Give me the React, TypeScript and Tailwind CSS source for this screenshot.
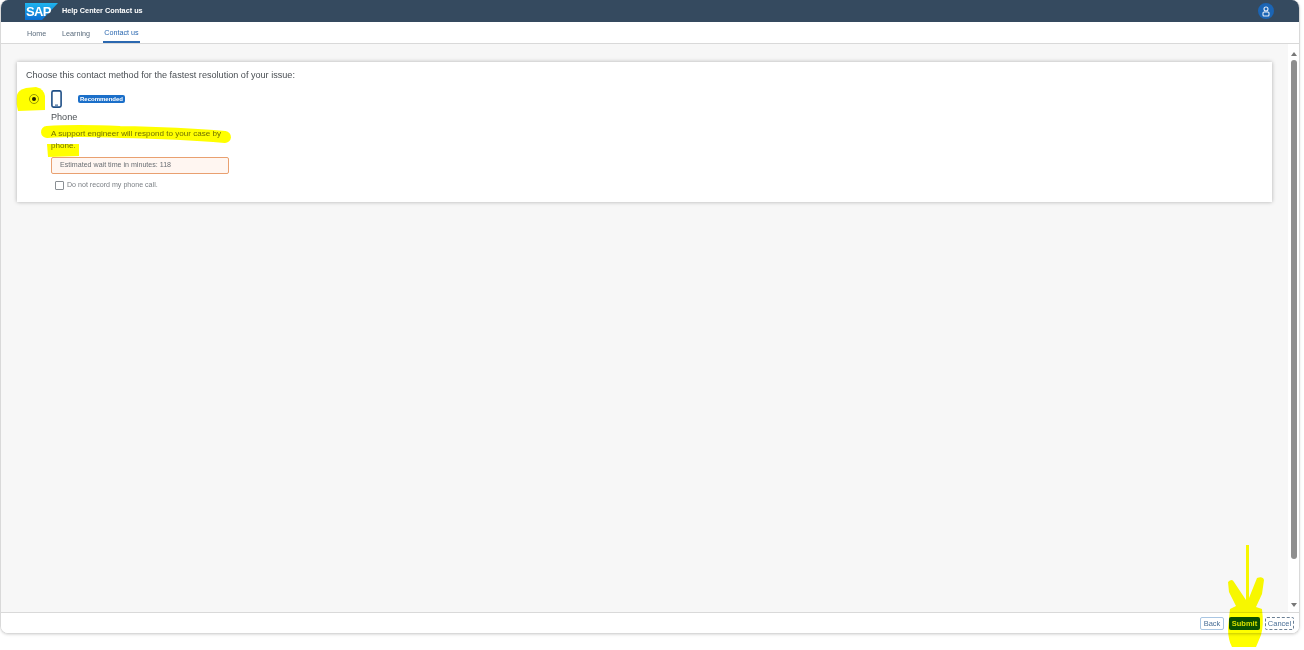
function SapLogo() {
  return (
    <svg width="33" height="20" viewBox="0 0 33 20" className="block">
      <defs>
        <linearGradient id="sapGrad" x1="0" y1="0" x2="0" y2="1">
          <stop offset="0" stopColor="#1fb4ee" />
          <stop offset="1" stopColor="#0a6ed1" />
        </linearGradient>
      </defs>
      <polygon points="0,2 33,2 17,19 0,19" fill="url(#sapGrad)" />
      <text x="1" y="15" fontFamily="'Liberation Sans', sans-serif" fontSize="13" fontWeight="700" letterSpacing="-0.6" fill="#fff">
        SAP
      </text>
    </svg>
  )
}

function UserAvatar() {
  return (
    <div className="w-4 h-4 rounded-full bg-[#1b65b5] flex items-center justify-center">
      <svg width="10" height="11" viewBox="0 0 10 11" fill="none" stroke="#e6eef8" strokeWidth="1.1">
        <circle cx="5" cy="3" r="2" />
        <rect x="2" y="6" width="6" height="4" rx="1" />
      </svg>
    </div>
  )
}

// Yellow marker scribbles somebody drew on top of the screenshot
function Highlights() {
  return (
    <svg width="1304" height="650" viewBox="0 0 1304 650" className="absolute left-0 top-0 pointer-events-none mix-blend-multiply">
      <path d="M17 95 Q18 90 26 88 L36 87 Q44 89 45 96 L45 110 L18 111 Q16 104 17 95 Z" fill="#ffff00" />
      <path d="M47 132 Q75 130 120 132 Q180 133 225 137" stroke="#ffff00" strokeWidth="12" fill="none" strokeLinecap="round" />
      <path d="M47 144 L79 144 L79 156 L48 157 Z" fill="#ffff00" />
      <path
        d="M1246 545 L1249 545 L1249 598 L1257 578 Q1263 576 1264 580 L1262 594 L1256 607 L1262 609 Q1264 625 1261 635 L1256 647 L1232 647 Q1228 640 1228 628 L1230 609 L1236 606 L1229 592 L1228 582 Q1232 578 1234 582 L1246 600 Z"
        fill="#ffff00"
      />
    </svg>
  )
}

export default function App() {
  return (
    <div className="relative h-[650px] w-[1304px] overflow-hidden bg-white font-['Liberation_Sans',sans-serif]">
      <div className="flex h-[634px] w-[1300px] flex-col overflow-hidden rounded-lg border-b border-r border-l border-[#d9d9d9] shadow-sm">
        {/* Shell bar */}
        <header className="flex h-[22px] shrink-0 items-center justify-between bg-[#354a5f] pl-[24px] pr-[25px]">
          <div className="flex items-center gap-[4px]">
            <SapLogo />
            <span className="pt-[1px] text-[7.3px] font-bold text-white">Help Center Contact us</span>
          </div>
          <UserAvatar />
        </header>

        {/* Tabs */}
        <nav className="flex h-[22px] shrink-0 items-stretch border-b border-[#d9d9d9] bg-white pl-[26px] pt-[3px] text-[7.2px] text-[#5a6b7c]">
          <span className="flex w-[35px] items-center">Home</span>
          <span className="flex w-[41px] items-center">Learning</span>
          <span className="flex w-[37px] items-center justify-center border-b-2 border-[#2b68b0] text-[#2b68b0]">Contact us</span>
        </nav>

        {/* Content + scrollbar */}
        <div className="flex min-h-0 flex-1 bg-[#f7f7f7]">
          <main className="min-w-0 flex-1 pl-[16px] pr-[16px] pt-[18px]">
            <section className="h-[140px] bg-white pl-[9px] pt-[7px] shadow-[0_0_4px_rgba(0,0,0,0.3)]">
              <p className="text-[9.1px] leading-[12px] text-[#4a4f54]">
                Choose this contact method for the fastest resolution of your issue:
              </p>
              <div className="mt-[8px] flex">
                <div className="flex h-[20px] w-[13px] items-center justify-end">
                  <div className="flex h-[10px] w-[10px] items-center justify-center rounded-full border border-[#9a9c60]">
                    <div className="h-[4px] w-[4px] rounded-full bg-[#222]" />
                  </div>
                </div>
                <div className="ml-[12px] w-[178px]">
                  <div className="flex h-[20px] items-center">
                    <svg width="11" height="18" viewBox="0 0 11 18" fill="none">
                      <rect x="0.9" y="0.9" width="9.2" height="16.2" rx="1.6" stroke="#1f4f86" strokeWidth="1.6" />
                      <rect x="4" y="14.6" width="3" height="1" fill="#1f4f86" />
                    </svg>
                    <span className="ml-[16px] rounded-[2px] bg-[#1b6fc9] px-[2px] text-[6px] font-bold leading-[8px] text-white">
                      Recommended
                    </span>
                  </div>
                  <p className="mt-[2px] text-[9.1px] leading-[12px] text-[#4a4f54]">Phone</p>
                  <p className="mt-[5px] text-[8.1px] leading-[12px] text-[#70705a]">
                    A support engineer will respond to your case by phone.
                  </p>
                  <div className="mt-[5px] flex h-[17px] items-center rounded-[2px] border border-[#e9a070] bg-[#fff6f1] pl-[8px] text-[7.1px] text-[#6a6f74]">
                    Estimated wait time in minutes: 118
                  </div>
                  <label className="ml-[4px] mt-[7px] flex items-center gap-[3px] text-[7.1px] leading-[9px] text-[#7a7f84]">
                    <span className="h-[9px] w-[9px] rounded-[1px] border border-[#8a8f94] bg-white" />
                    Do not record my phone call.
                  </label>
                </div>
              </div>
            </section>
          </main>
          <div className="flex w-[11px] shrink-0 flex-col items-center bg-white pb-[5px] pt-[8px]">
            <div className="h-0 w-0 border-x-[3.5px] border-b-[4px] border-x-transparent border-b-[#777]" />
            <div className="mt-[4px] h-[499px] w-[6px] rounded-full bg-[#8e8e8e]" />
            <div className="flex-1" />
            <div className="h-0 w-0 border-x-[3.5px] border-t-[4px] border-x-transparent border-t-[#777]" />
          </div>
        </div>

        {/* Footer actions */}
        <footer className="flex h-[21px] shrink-0 items-center justify-end gap-[5px] border-t border-[#d9d9d9] bg-white pr-[5px] pt-[1px] text-[7.5px]">
          <button className="h-[13px] w-[24px] rounded-[2px] border border-[#a9c6e3] bg-white text-[#4a6f96]">Back</button>
          <button className="h-[13px] w-[31px] rounded-[2px] bg-[#0a4f0a] font-bold text-[#d8e050]">Submit</button>
          <button className="h-[13px] w-[29px] rounded-[2px] border border-dashed border-[#6a7f94] bg-white text-[#4a6f96]">Cancel</button>
        </footer>
      </div>
      <Highlights />
    </div>
  )
}
